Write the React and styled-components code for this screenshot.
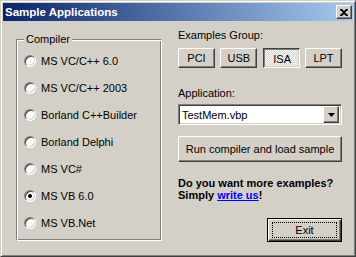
import React, { useState } from 'react';
import styled, { createGlobalStyle, css } from 'styled-components';

const compilers = [
  'MS VC/C++ 6.0',
  'MS VC/C++ 2003',
  'Borland C++Builder',
  'Borland Delphi',
  'MS VC#',
  'MS VB 6.0',
  'MS VB.Net',
];

const groups = ['PCI', 'USB', 'ISA', 'LPT'];

const App = () => {
  const [compiler, setCompiler] = useState('MS VB 6.0');
  const [group, setGroup] = useState('ISA');

  return (
    <>
      <GlobalStyle />
      <Window>
        <TitleBar>
          <Title>Sample Applications</Title>
          <CloseButton>
            <svg width="8" height="7" viewBox="0 0 8 7">
              <path d="M0 0h2l2 2 2-2h2v1L5 3.5 8 6v1H6L4 5 2 7H0V6l3-2.5L0 1z" fill="#000" />
            </svg>
          </CloseButton>
        </TitleBar>
        <Body>
          <Group>
            <Legend>Compiler</Legend>
            <RadioList>
              {compilers.map((name) => (
                <RadioRow key={name} onClick={() => setCompiler(name)}>
                  <Radio $checked={compiler === name} />
                  {name}
                </RadioRow>
              ))}
            </RadioList>
          </Group>
          <Side>
            <Label>Examples Group:</Label>
            <ButtonRow>
              {groups.map((g) => (
                <GroupButton key={g} $pressed={group === g} onClick={() => setGroup(g)}>
                  {g}
                </GroupButton>
              ))}
            </ButtonRow>
            <Label $top={19}>Application:</Label>
            <Combo>
              <ComboText>TestMem.vbp</ComboText>
              <DropButton>
                <svg width="7" height="4" viewBox="0 0 7 4">
                  <path d="M0 0h7L3.5 4z" fill="#000" />
                </svg>
              </DropButton>
            </Combo>
            <WideButton>Run compiler and load sample</WideButton>
            <Promo>
              Do you want more examples?
              <br />
              Simply <Link href="#">write us</Link>!
            </Promo>
            <ExitButton>
              <Focus>Exit</Focus>
            </ExitButton>
          </Side>
        </Body>
      </Window>
    </>
  );
};

const GlobalStyle = createGlobalStyle`
  body {
    margin: 0;
    background: #d4d0c8;
    font-family: "Liberation Sans", Arial, sans-serif;
    font-size: 11px;
  }
`;

const Window = styled.div`
  box-sizing: border-box;
  width: 356px;
  height: 257px;
  padding: 2px;
  display: flex;
  flex-direction: column;
  background: #d4d0c8;
  border: 1px solid;
  border-color: #d4d0c8 #404040 #404040 #d4d0c8;
  box-shadow: inset 1px 1px #fff, inset -1px -1px #808080;
`;

const TitleBar = styled.div`
  height: 18px;
  display: flex;
  align-items: center;
  justify-content: space-between;
  padding: 0 1px 0 2px;
  background: linear-gradient(to right, #0a246a, #a6caf0);
`;

const Title = styled.span`
  color: #fff;
  font-weight: bold;
  font-size: 11.5px;
`;

const bevel = css`
  border: 1px solid;
  border-color: #fff #404040 #404040 #fff;
  box-shadow: inset -1px -1px #808080, inset 1px 1px #d4d0c8;
`;

const CloseButton = styled.div`
  box-sizing: border-box;
  width: 16px;
  height: 14px;
  display: flex;
  align-items: center;
  justify-content: center;
  background: #d4d0c8;
  ${bevel}
`;

const Body = styled.div`
  flex: 1;
  display: flex;
  align-items: flex-start;
  gap: 16px;
  padding-left: 13px;
`;

const Group = styled.div`
  position: relative;
  box-sizing: border-box;
  width: 146px;
  height: 202px;
  margin-top: 18px;
  border: 1px solid;
  border-color: #808080 #fff #fff #808080;
  box-shadow: inset 1px 1px #fff, inset -1px -1px #808080;
`;

const Legend = styled.span`
  position: absolute;
  top: -7px;
  left: 7px;
  padding: 0 2px;
  line-height: 13px;
  background: #d4d0c8;
`;

const RadioList = styled.div`
  display: flex;
  flex-direction: column;
  padding: 7px 0 0 7px;
`;

const RadioRow = styled.div`
  height: 27px;
  display: flex;
  align-items: center;
  cursor: default;
`;

const Radio = styled.span`
  box-sizing: border-box;
  width: 12px;
  height: 12px;
  margin-right: 5px;
  display: flex;
  align-items: center;
  justify-content: center;
  border-radius: 50%;
  background: #fff;
  border: 1px solid;
  border-color: #808080 #fff #fff #808080;
  box-shadow: inset 1px 1px #404040, inset -1px -1px #d4d0c8;

  &::after {
    content: '';
    width: 4px;
    height: 4px;
    border-radius: 50%;
    background: ${(p) => (p.$checked ? '#000' : 'transparent')};
  }
`;

const Side = styled.div`
  width: 164px;
  display: flex;
  flex-direction: column;
  padding-top: 8px;
`;

const Label = styled.div`
  line-height: 13px;
  margin-top: ${(p) => p.$top || 0}px;
`;

const ButtonRow = styled.div`
  display: flex;
  justify-content: space-between;
  margin-top: 6px;
`;

const Button = styled.button`
  box-sizing: border-box;
  padding: 0;
  font-family: inherit;
  font-size: 11px;
  color: #000;
  background: #d4d0c8;
  ${bevel}
`;

const GroupButton = styled(Button)`
  width: 37px;
  height: 20px;

  ${(p) =>
    p.$pressed &&
    css`
      padding: 2px 0 0 2px;
      border-color: #404040 #fff #fff #404040;
      box-shadow: inset 1px 1px #808080, inset -1px -1px #d4d0c8;
      background: repeating-conic-gradient(#fff 0 25%, #d4d0c8 0 50%) 0 0 / 2px 2px;
    `}
`;

const Combo = styled.div`
  box-sizing: border-box;
  height: 21px;
  margin-top: 4px;
  display: flex;
  align-items: center;
  background: #fff;
  border: 1px solid;
  border-color: #808080 #fff #fff #808080;
  box-shadow: inset 1px 1px #404040, inset -1px -1px #d4d0c8;
  padding: 1px 2px 1px 2px;
`;

const ComboText = styled.span`
  flex: 1;
  padding-left: 1px;
`;

const DropButton = styled.div`
  box-sizing: border-box;
  width: 16px;
  height: 17px;
  display: flex;
  align-items: center;
  justify-content: center;
  background: #d4d0c8;
  ${bevel}
`;

const WideButton = styled(Button)`
  height: 26px;
  margin-top: 11px;
`;

const Promo = styled.div`
  margin-top: 15px;
  font-weight: bold;
  line-height: 12px;
`;

const Link = styled.a`
  color: #0000ff;
  text-decoration: underline;
`;

const ExitButton = styled(Button)`
  align-self: flex-end;
  width: 75px;
  height: 24px;
  margin-top: 17px;
  padding: 3px 4px;
  display: flex;
  border-color: #000;
  box-shadow: inset 1px 1px #fff, inset -1px -1px #404040, inset -2px -2px #808080;
`;

const Focus = styled.span`
  flex: 1;
  display: flex;
  align-items: center;
  justify-content: center;
  border: 1px dotted #000;
`;

export default App;
